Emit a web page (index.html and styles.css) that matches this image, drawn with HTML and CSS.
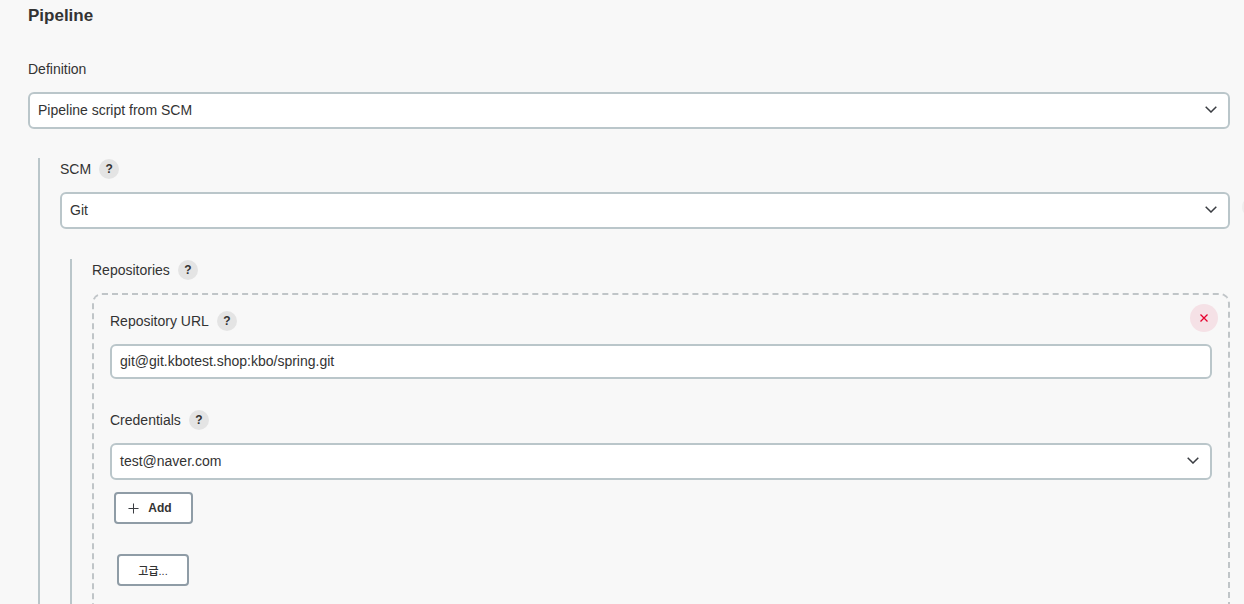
FILE: index.html
```html
<!DOCTYPE html>
<html lang="en">
<head>
    <meta charset="UTF-8">
    <meta name="viewport" content="width=device-width, initial-scale=1.0">
    <title>Pipeline</title>
    <link rel="stylesheet" href="styles.css">
</head>
<body>
    <h2 class="section-title">Pipeline</h2>
    <div class="field definition">
        <div class="label-row"><span class="label">Definition</span></div>
        <div class="select">
            <span>Pipeline script from SCM</span>
            <svg class="chevron" viewBox="0 0 12 7"><path d="M.7.7 6 6l5.3-5.3"/></svg>
        </div>
    </div>
    <div class="nested scm">
        <div class="field">
            <div class="label-row"><span class="label">SCM</span><span class="help">?</span></div>
            <div class="select">
                <span>Git</span>
                <svg class="chevron" viewBox="0 0 12 7"><path d="M.7.7 6 6l5.3-5.3"/></svg>
            </div>
            <span class="edge-dot"></span>
        </div>
        <div class="nested repos">
            <div class="label-row"><span class="label">Repositories</span><span class="help">?</span></div>
            <div class="repo-box">
                <button class="remove" type="button">
                    <svg viewBox="0 0 10 10"><path d="M1.5 1.5l7 7M8.5 1.5l-7 7"/></svg>
                </button>
                <div class="label-row"><span class="label">Repository URL</span><span class="help">?</span></div>
                <div class="input">git@git.kbotest.shop:kbo/spring.git</div>
                <div class="label-row creds"><span class="label">Credentials</span><span class="help">?</span></div>
                <div class="select">
                    <span>test@naver.com</span>
                    <svg class="chevron" viewBox="0 0 12 7"><path d="M.7.7 6 6l5.3-5.3"/></svg>
                </div>
                <button class="btn add" type="button">
                    <svg viewBox="0 0 12 12"><path d="M6 .5v11M.5 6h11"/></svg>
                    Add
                </button>
                <button class="btn advanced" type="button">고급...</button>
            </div>
        </div>
    </div>
</body>
</html>
```

FILE: styles.css
```css
html, body {
    height: 604px;
    overflow: hidden;
}
body {
    margin: 0;
    padding: 0 14px 0 28px;
    background-color: #f8f8f8;
    color: #333;
    font-family: "Liberation Sans", "Noto Sans CJK KR", sans-serif;
    font-size: 14px;
    position: relative;
}
.section-title {
    margin: 0;
    padding-top: 6px;
    height: 20px;
    line-height: 20px;
    font-size: 17px;
    font-weight: 700;
}
.definition {
    margin-top: 33px;
}
.label-row {
    display: flex;
    align-items: center;
    gap: 8px;
    height: 20px;
    margin-bottom: 13px;
}
.label {
    font-size: 14px;
    line-height: 20px;
}
.help {
    width: 20px;
    height: 20px;
    border-radius: 50%;
    background-color: #e4e4e4;
    display: flex;
    align-items: center;
    justify-content: center;
    font-size: 12px;
    font-weight: 700;
}
.select, .input {
    box-sizing: border-box;
    display: flex;
    align-items: center;
    justify-content: space-between;
    background-color: #fff;
    border: 2px solid #bac6ca;
    border-radius: 6px;
    padding: 0 11px 2px 8px;
    height: 37px;
}
.input {
    height: 35px;
}
.chevron {
    width: 12px;
    height: 7px;
    fill: none;
    stroke: #3a3d42;
    stroke-width: 1.5;
}
.nested {
    border-left: 2px solid #bac6ca;
}
.scm {
    margin: 29px 0 0 10px;
    padding: 1px 0 0 20px;
}
.scm .field {
    position: relative;
}
.edge-dot {
    position: absolute;
    right: -20px;
    top: 41px;
    width: 8px;
    height: 14px;
    border-radius: 50%;
    background-color: #eee;
}
.repos {
    margin: 30px 0 0 10px;
    padding: 1px 0 0 20px;
}
.repo-box {
    position: relative;
    box-sizing: border-box;
    height: 340px;
    padding: 16px 16px 0 16px;
    border: 2px dashed #c0c5c8;
    border-radius: 10px;
}
.repo-box .creds {
    margin: 31px 0 13px;
}
.remove {
    position: absolute;
    top: 9px;
    right: 10px;
    width: 28px;
    height: 28px;
    padding: 0;
    border: 0;
    border-radius: 50%;
    background-color: #f5e1e6;
    display: flex;
    align-items: center;
    justify-content: center;
}
.remove svg {
    width: 10px;
    height: 10px;
    fill: none;
    stroke: #e6002e;
    stroke-width: 1.3;
}
.btn {
    display: flex;
    align-items: center;
    justify-content: center;
    box-sizing: border-box;
    background-color: #fff;
    border: 2px solid #8f9ca6;
    border-radius: 4px;
    color: #333;
    font-family: inherit;
    font-size: 12px;
    font-weight: 700;
    padding: 0;
}
.add {
    width: 79px;
    height: 32px;
    gap: 9px;
    margin: 12px 0 0 4px;
    padding-right: 7px;
}
.add svg {
    width: 11px;
    height: 11px;
    fill: none;
    stroke: #3a3d42;
    stroke-width: 1.1;
}
.advanced {
    width: 72px;
    height: 32px;
    margin: 30px 0 0 7px;
    font-weight: 500;
    font-size: 11px;
}
```
